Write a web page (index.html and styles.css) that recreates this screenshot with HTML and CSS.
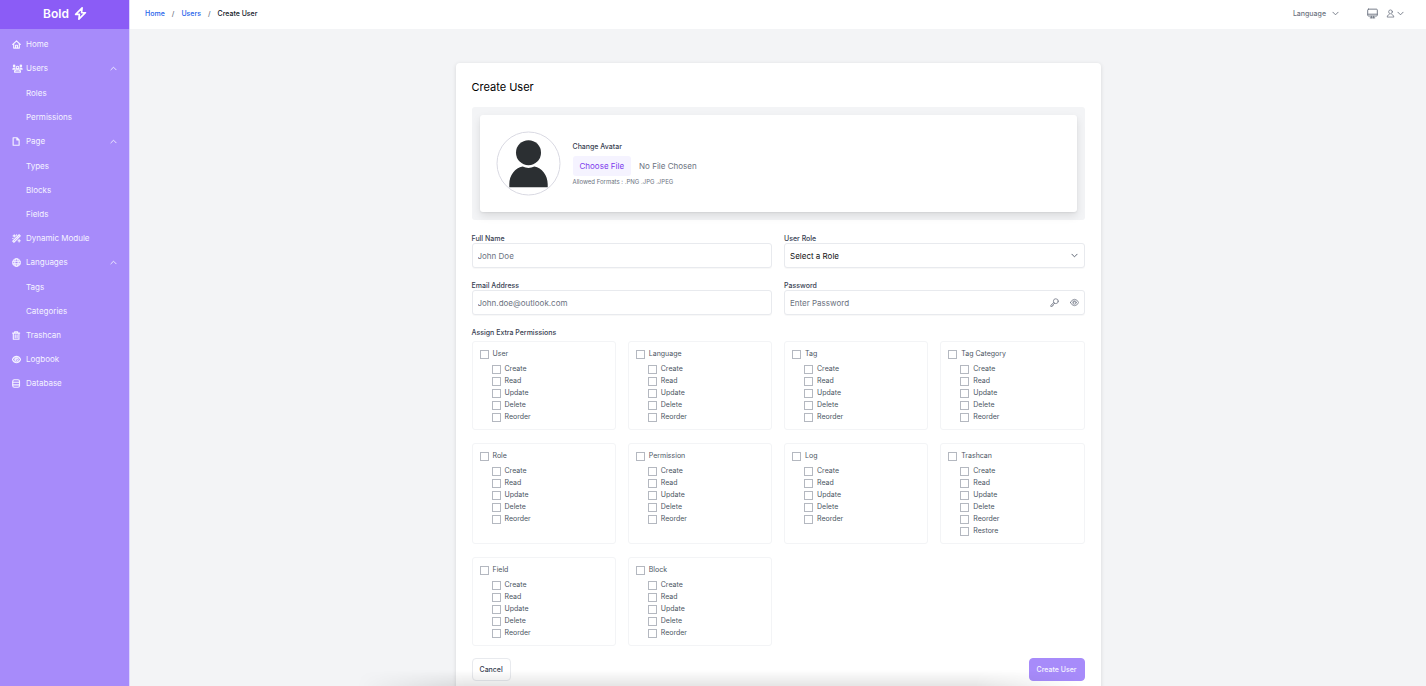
FILE: index.html
```html
<!DOCTYPE html>
<html lang="en">
<head>
<meta charset="utf-8">
<meta name="viewport" content="width=device-width, initial-scale=1">
<title>Create User</title>
<link rel="stylesheet" href="styles.css">
</head>
<body>
<svg class="sprite" aria-hidden="true">
  <symbol id="up" viewBox="0 0 24 24"><path d="M3 16.500l9-9 9 9"/></symbol>
  <symbol id="down" viewBox="0 0 24 24"><path d="M3 7.500l9 9 9-9"/></symbol>
  <symbol id="home" viewBox="0 0 24 24"><path d="M2 12L12 2.5 22 12M4.5 10v11.5h15V10M9.5 21v-7h5v7"/></symbol>
  <symbol id="users" viewBox="0 0 28 24"><g class="solid"><circle cx="5" cy="5" r="3.500"/><circle cx="23" cy="5" r="3.500"/><path d="M0 15q0-6 5-6 3 0 4 2l-1 4zM28 15q0-6-5-6-3 0-4 2l1 4z"/></g><circle cx="14" cy="9.500" r="3.500"/><path d="M6 21.500q0-6 5-6h6q5 0 5 6z"/></symbol>
  <symbol id="page" viewBox="0 0 24 24"><path d="M3 2h10l6 6v14H3zM13 2v6h6"/></symbol>
  <symbol id="wand" viewBox="0 0 24 24"><path d="M2 19L19 2l3 3L5 22zM14 7l3 3M6 2v6M3 5h6M19 15v6M16 18h6M12 2v1M2 12h1"/></symbol>
  <symbol id="globe" viewBox="0 0 24 24"><circle cx="12" cy="12" r="10"/><ellipse cx="12" cy="12" rx="4.500" ry="10"/><path d="M2.500 8.500h19M2.500 15.500h19"/></symbol>
  <symbol id="trash" viewBox="0 0 24 24"><path d="M1.500 5.500h19M7 5V2h8v3M3.500 6v16h15V6M8.500 10v8M13.500 10v8"/></symbol>
  <symbol id="eye" viewBox="0 0 24 24"><path d="M1 12q4-8.500 11-8.500t11 8.500q-4 8.500-11 8.500T1 12z"/><circle cx="12" cy="12" r="4.500"/><path d="M12 9.500q0 2.500-2.500 2.500"/></symbol>
  <symbol id="database" viewBox="0 0 24 24"><rect x="2" y="2" width="18" height="20" rx="4"/><path d="M2 8.500h18M2 15.500h18"/></symbol>
  <symbol id="bolt" viewBox="0 0 24 24"><path d="M15 1.500L3 13.500h7L9 22.500l12-12h-7z"/></symbol>
  <symbol id="monitor" viewBox="0 0 24 24"><rect x="1.500" y="2.500" width="21" height="15" rx="2"/><path d="M2 13.500h20M9.500 18v3.500M14.500 18v3.500M7 21.500h10"/></symbol>
  <symbol id="person" viewBox="0 0 24 24"><circle cx="12" cy="7.500" r="5"/><path d="M8.500 14.500Q3 16 3 21.500h18q0-5.500-5.500-7"/></symbol>
  <symbol id="key" viewBox="0 0 24 24"><circle cx="15.500" cy="8.500" r="6.500"/><path d="M10 12l-8 7.500V22.500h4v-3h3v-3l3.500-2.500"/></symbol>
</svg>
<div class="app">
  <aside class="sidebar">
    <a class="brand" href="#">Bold <svg class="icon icon-logo"><use href="#bolt"/></svg></a>
    <nav aria-label="Main">
      <ul class="menu">
        <li><a href="#"><svg class="icon"><use href="#home"/></svg>Home</a></li>
        <li><a href="#"><svg class="icon icon-users"><use href="#users"/></svg>Users<svg class="icon caret"><use href="#up"/></svg></a>
          <ul class="submenu"><li><a href="#">Roles</a></li><li><a href="#">Permissions</a></li></ul></li>
        <li><a href="#"><svg class="icon"><use href="#page"/></svg>Page<svg class="icon caret"><use href="#up"/></svg></a>
          <ul class="submenu"><li><a href="#">Types</a></li><li><a href="#">Blocks</a></li><li><a href="#">Fields</a></li></ul></li>
        <li><a href="#"><svg class="icon"><use href="#wand"/></svg>Dynamic Module</a></li>
        <li><a href="#"><svg class="icon"><use href="#globe"/></svg>Languages<svg class="icon caret"><use href="#up"/></svg></a>
          <ul class="submenu"><li><a href="#">Tags</a></li><li><a href="#">Categories</a></li></ul></li>
        <li><a href="#"><svg class="icon"><use href="#trash"/></svg>Trashcan</a></li>
        <li><a href="#"><svg class="icon"><use href="#eye"/></svg>Logbook</a></li>
        <li><a href="#"><svg class="icon"><use href="#database"/></svg>Database</a></li>
      </ul>
    </nav>
  </aside>
  <div class="content">
    <header class="topbar">
      <nav class="crumbs" aria-label="Breadcrumb">
        <a href="#">Home</a><span class="slash">/</span><a href="#">Users</a><span class="slash">/</span><span class="current">Create User</span>
      </nav>
      <div class="tools">
        <button class="tool language" type="button">Language <svg class="icon small"><use href="#down"/></svg></button>
        <button class="tool" type="button" aria-label="Display"><svg class="icon display"><use href="#monitor"/></svg></button>
        <button class="tool account" type="button" aria-label="Account"><svg class="icon"><use href="#person"/></svg><svg class="icon small"><use href="#down"/></svg></button>
      </div>
    </header>
    <main class="main">
      <form class="card">
        <h1>Create User</h1>
        <div class="avatar-panel">
          <div class="avatar-box">
            <svg class="avatar" viewBox="0 0 66 66" role="img" aria-label="Avatar"><circle class="ring" cx="33" cy="33" r="32"/><circle cx="33" cy="22" r="12.700"/><path d="M13.500 57v-3c0-9 6-17 13.500-18 4 2 8 2 12 0 7.500 1 13.500 9 13.500 18v3z"/></svg>
            <div class="upload">
              <label for="avatar">Change Avatar</label>
              <input id="avatar" type="file" accept=".png,.jpg,.jpeg">
              <p>Allowed Formats : .PNG .JPG .JPEG</p>
            </div>
          </div>
        </div>
        <div class="fields">
          <div class="field"><label for="name">Full Name</label><input class="control" id="name" type="text" placeholder="John Doe"></div>
          <div class="field"><label for="role">User Role</label>
            <div class="control select"><select id="role"><option>Select a Role</option></select><svg class="icon small"><use href="#down"/></svg></div></div>
          <div class="field"><label for="email">Email Address</label><input class="control" id="email" type="email" placeholder="John.doe@outlook.com"></div>
          <div class="field"><label for="password">Password</label>
            <div class="control password"><input id="password" type="password" placeholder="Enter Password"><button type="button" aria-label="Generate password"><svg class="icon"><use href="#key"/></svg></button><button type="button" aria-label="Show password"><svg class="icon"><use href="#eye"/></svg></button></div></div>
        </div>
        <h2>Assign Extra Permissions</h2>
        <div class="permissions" id="permissions"></div>
        <div class="actions">
          <button class="btn" type="button">Cancel</button>
          <button class="btn primary" type="submit">Create User</button>
        </div>
      </form>
    </main>
  </div>
</div>
<div class="bottom-shade"></div>
<script src="app.js"></script>
</body>
</html>
```
FILE: styles.css
```css
* { box-sizing: border-box; }
body { margin: 0; font-family: Inter, "Liberation Sans", sans-serif; font-size: 8px; line-height: 12px; color: #4b5563; background: #f3f4f6; }
ul, p, h1, h2 { margin: 0; padding: 0; list-style: none; }
a { color: inherit; text-decoration: none; }
button, input, select { font: inherit; color: inherit; margin: 0; padding: 0; border: 0; background: none; }
.sprite { position: absolute; width: 0; height: 0; }
.icon { width: 9px; height: 9px; flex: none; fill: none; stroke: currentColor; stroke-width: 2; stroke-linecap: round; stroke-linejoin: round; }
.solid { fill: currentColor; stroke: none; }
.small { width: 7px; height: 7px; stroke-width: 3; }

.app { display: flex; height: 100vh; }
.sidebar { flex: none; width: 130px; background: #a78bfa; color: #f5f3ff; border-right: 1px solid #ddd6fe; }
.brand { display: flex; align-items: center; justify-content: center; gap: 5px; height: 29px; padding: 0 0 2px 1px; background: #8b5cf6; color: #fff; font-size: 12px; font-weight: 600; }
.icon-logo { width: 13px; height: 13px; stroke-width: 3; }
.menu { padding-top: 3px; }
.menu a { display: flex; align-items: center; gap: 5px; height: 24px; padding: 0 12px; }
.menu .icon { stroke-width: 3; }
.menu .icon-users { width: 11px; margin-right: -2px; }
.menu .caret { width: 7px; height: 7px; margin-left: auto; stroke-width: 3; }
.submenu { padding-top: 1px; }
.menu .submenu a { padding-left: 26px; }

.content { flex: 1; min-width: 0; display: flex; flex-direction: column; }
.topbar { flex: none; display: flex; align-items: center; justify-content: space-between; height: 29px; padding: 0 22px 2px 15px; background: #fff; font-size: 7px; font-weight: 500; }
.crumbs { display: flex; gap: 7px; color: #2563eb; }
.slash { color: #6b7280; }
.current { color: #111827; }
.tools { display: flex; align-items: center; color: #6b7280; }
.tool { display: flex; align-items: center; }
.language { gap: 6px; margin-right: 28px; }
.display { width: 11px; height: 11px; margin-right: 8px; }
.account { gap: 2px; }

.main { flex: 1; min-height: 0; overflow: auto; scrollbar-width: none; padding: 34px 24px; }
.card { max-width: 645px; margin: 0 auto; padding: 16px; background: #fff; border-radius: 4px; box-shadow: 0 1px 4px rgba(0, 0, 0, .12); }
h1 { margin-bottom: 12px; color: #000; font-size: 11px; line-height: 16px; font-weight: 400; }
.avatar-panel { padding: 8px; background: #f3f4f6; border-radius: 3px; }
.avatar-box { display: flex; align-items: center; gap: 12px; padding: 16px; background: #fff; border-radius: 3px; box-shadow: 0 4px 8px rgba(0, 0, 0, .1), 0 1px 2px rgba(0, 0, 0, .06); }
.avatar { width: 65px; height: 65px; fill: #2b2f32; }
.ring { fill: #fff; stroke: #d8d8e2; stroke-width: 1; }
.upload { padding-top: 2px; }
.upload label, .field label, h2 { display: block; color: #374151; font-size: 7px; line-height: 9px; font-weight: 500; }
.upload input { display: block; margin: 5px 0 1px; color: #6b7280; text-transform: capitalize; }
.upload input::file-selector-button { margin: 0 8px 0 0; padding: 4px 7px; border: 0; border-radius: 3px; background: #f5f3ff; color: #7c3aed; font: inherit; }
.upload p { color: #6b7280; font-size: 6px; line-height: 10px; }

.fields { display: grid; grid-template-columns: 1fr 1fr; gap: 13px 12px; margin: 14px 0 13px; }
.control { width: 100%; height: 25px; padding: 0 5px; border: 1px solid #e8eaee; border-radius: 3px; background: #fff; box-shadow: 0 1px 1px rgba(0, 0, 0, .03); }
.control, .control input { font-size: 8px; }
::placeholder { color: #6b7280; opacity: 1; }
.select, .password { display: flex; align-items: center; }
.select { position: relative; color: #111; }
.select select { flex: 1; height: 23px; appearance: none; }
.select .icon { position: absolute; right: 6px; pointer-events: none; color: #4b5563; }
.password { gap: 11px; }
.password input { flex: 1; min-width: 0; }
.password button { display: flex; color: #6b7280; }

h2 { margin-bottom: 4px; }
.permissions { display: grid; grid-template-columns: repeat(4, 1fr); gap: 13px 12px; }
.group { margin: 0; padding: 6px 7px; border: 1px solid #f3f4f6; border-radius: 3px; font-size: 7px; }
.group label { display: flex; align-items: center; gap: 4px; height: 12px; }
.group ul { padding: 3px 0 0 12px; }
.group input { appearance: none; width: 9px; height: 9px; border: 1px solid #b4b8c0; background: #fff; }
.group input:checked { background: #8b5cf6; }

.actions { display: flex; justify-content: space-between; margin-top: 12px; }
.btn { height: 23px; padding: 0 7px; border: 1px solid #e8eaee; border-radius: 4px; background: #fff; color: #374151; font-size: 7px; font-weight: 500; }
.primary { border-color: #a78bfa; background: #a78bfa; color: #f5f3ff; }
.bottom-shade { position: fixed; left: 25%; right: 24%; bottom: 0; height: 16px; pointer-events: none; background: linear-gradient(to bottom, rgba(0, 0, 0, 0), rgba(0, 0, 0, .1)); mask-image: linear-gradient(to right, transparent, #000 15%, #000 85%, transparent); }
```
FILE: app.js
```js
const actions = ["Create", "Read", "Update", "Delete", "Reorder"];
const groups = ["User", "Language", "Tag", "Tag Category", "Role", "Permission", "Log", "Trashcan", "Field", "Block"];

const checkbox = (text) => `<label><input type="checkbox">${text}</label>`;

document.getElementById("permissions").innerHTML = groups.map((name) => {
  const items = name === "Trashcan" ? [...actions, "Restore"] : actions;
  return `<div class="group">${checkbox(name)}<ul>${items.map((item) => `<li>${checkbox(item)}</li>`).join("")}</ul></div>`;
}).join("");
```
